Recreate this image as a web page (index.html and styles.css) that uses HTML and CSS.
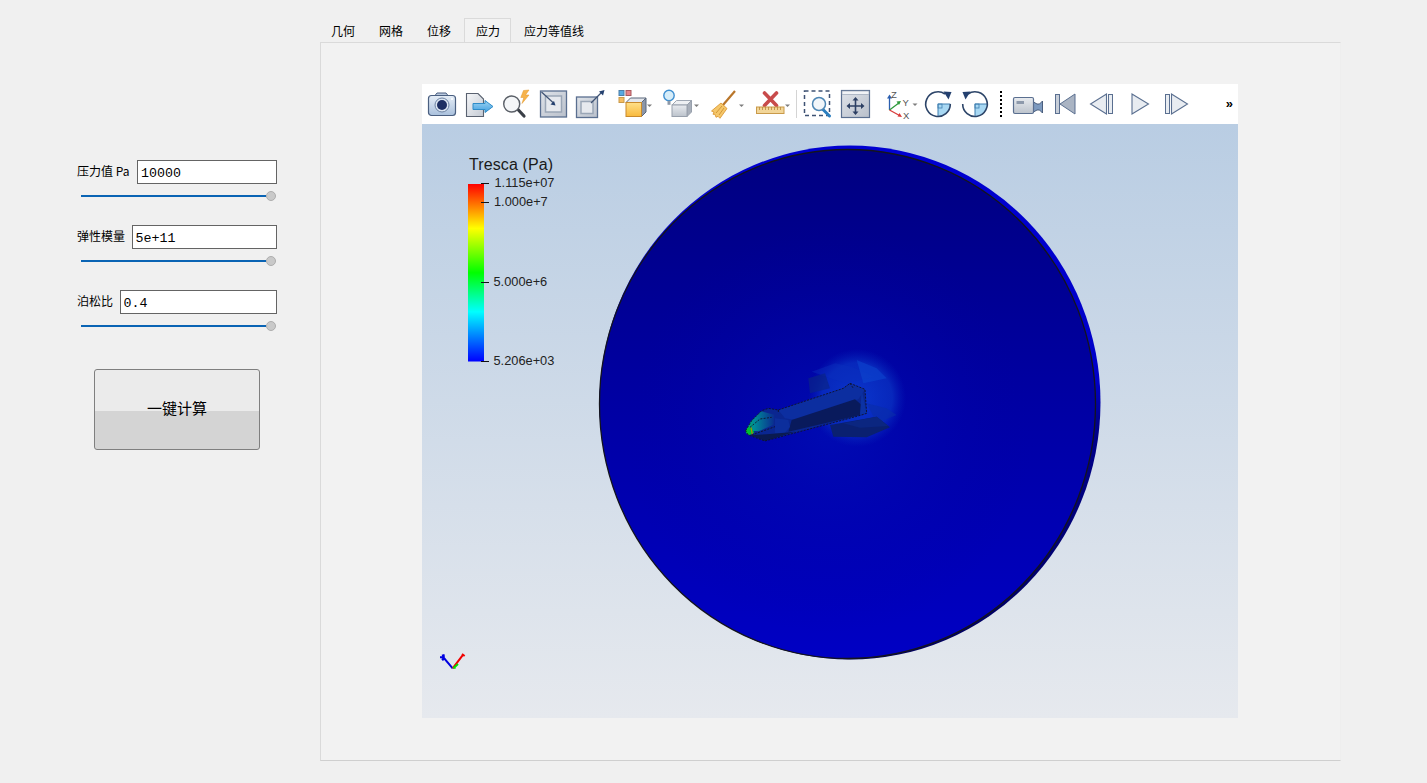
FILE: index.html
```html
<!DOCTYPE html>
<html lang="zh-CN">
<head>
<meta charset="utf-8">
<title>应力</title>
<link rel="stylesheet" href="styles.css">
</head>
<body>
<div class="app">
  <aside class="panel">
    <div class="field">
      <div class="field-row"><label class="field-label field-label-wide">压力值 Pa</label><input class="field-input" type="text" value="10000"></div>
      <div class="slider"><span class="slider-track"></span><span class="slider-knob"></span></div>
    </div>
    <div class="field">
      <div class="field-row"><label class="field-label">弹性模量</label><input class="field-input" type="text" value="5e+11"></div>
      <div class="slider"><span class="slider-track"></span><span class="slider-knob"></span></div>
    </div>
    <div class="field">
      <div class="field-row"><label class="field-label">泊松比</label><input class="field-input" type="text" value="0.4"></div>
      <div class="slider"><span class="slider-track"></span><span class="slider-knob"></span></div>
    </div>
    <button class="run-button" type="button">一键计算</button>
  </aside>

  <main class="workspace">
    <nav class="tabs">
      <span class="tab">几何</span>
      <span class="tab">网格</span>
      <span class="tab">位移</span>
      <span class="tab tab-active">应力</span>
      <span class="tab">应力等值线</span>
    </nav>
    <section class="pane">
      <div class="viewer">
        <div class="toolbar">
          <!-- camera -->
          <svg class="tool" viewBox="0 0 39 40">
            <defs>
              <linearGradient id="gBlue" x1="0" y1="0" x2="0" y2="1"><stop offset="0" stop-color="#e6eef7"/><stop offset="1" stop-color="#a9c0dc"/></linearGradient>
              <linearGradient id="gGray" x1="0" y1="0" x2="1" y2="1"><stop offset="0" stop-color="#f6f7f9"/><stop offset="1" stop-color="#c4cad3"/></linearGradient>
              <linearGradient id="gFrame" x1="0" y1="0" x2="1" y2="1"><stop offset="0" stop-color="#dfe3e9"/><stop offset="1" stop-color="#b9c0cb"/></linearGradient>
              <linearGradient id="gSky" x1="0" y1="0" x2="0" y2="1"><stop offset="0" stop-color="#9fd4f3"/><stop offset="1" stop-color="#3f9fe0"/></linearGradient>
              <linearGradient id="gGold" x1="0" y1="0" x2="0" y2="1"><stop offset="0" stop-color="#ffe08a"/><stop offset="1" stop-color="#f8b93c"/></linearGradient>
              <linearGradient id="gCube" x1="0" y1="0" x2="0" y2="1"><stop offset="0" stop-color="#e8ebef"/><stop offset="1" stop-color="#bcc3cc"/></linearGradient>
            </defs>
            <path d="M13 11.500l2-2.500h9l2 2.500z" fill="#b9c9de" stroke="#4a5f80"/>
            <rect x="6.500" y="11.500" width="27" height="20" rx="3" fill="url(#gBlue)" stroke="#4a5f80" stroke-width="1.200"/>
            <circle cx="20" cy="21" r="7" fill="#dce6f2" stroke="#6d83a3"/>
            <circle cx="20" cy="21" r="5" fill="#1d2f63"/>
            <circle cx="30" cy="15" r="1" fill="#fff"/>
          </svg>
          <!-- export -->
          <svg class="tool" viewBox="0 0 38 40">
            <path d="M5.500 9.500H17L22.500 15V32.500H5.500Z" fill="url(#gGray)" stroke="#5a6270" stroke-width="1.100"/>
            <path d="M12 19.500H24V16.500L32 22.500 24 28.500V25.500H12Z" fill="url(#gSky)" stroke="#2f8cc8"/>
          </svg>
          <!-- zoom to data -->
          <svg class="tool" viewBox="0 0 35 40">
            <path d="M18.500 25l6.500 7" stroke="#3a3f47" stroke-width="3.200" stroke-linecap="round"/>
            <circle cx="12.700" cy="20" r="8" fill="#f4f6f8" stroke="#5a5f67" stroke-width="1.400"/>
            <path d="M24.500 6.500l5.500-.5-3.500 5h3.500l-7 8.500 1.800-6h-3z" fill="#f7b34a" stroke="#e0962a" stroke-width=".5"/>
          </svg>
          <!-- reset -->
          <svg class="tool" viewBox="0 0 38 40">
            <rect x="6.500" y="7" width="26" height="26" fill="url(#gFrame)" stroke="#5a6f90" stroke-width="1.300"/>
            <rect x="11.500" y="12" width="16" height="16" fill="#e6e9ee" stroke="#9aa6b6" stroke-width="1.500"/>
            <path d="M7.500 8l12 11" stroke="#3e5273" stroke-width="1.200"/>
            <path d="M21.500 21.500l-5-1 3.500-3.500z" fill="#24406f"/>
          </svg>
          <!-- zoom out -->
          <svg class="tool" viewBox="0 0 37 40">
            <rect x="4.500" y="13" width="21" height="20.500" fill="url(#gFrame)" stroke="#5a6f90" stroke-width="1.300"/>
            <rect x="9" y="17.500" width="12" height="12" fill="#e6e9ee" stroke="#9aa6b6" stroke-width="1.500"/>
            <path d="M19 19l11-11" stroke="#3e5273" stroke-width="1.300"/>
            <path d="M32.500 6l-1.500 5.500-4-4z" fill="#24406f"/>
          </svg>
          <!-- color by -->
          <svg class="tool" viewBox="0 0 48 40">
            <rect x="10" y="6.500" width="5" height="5" fill="#58a9e2" stroke="#4c7fa8"/>
            <rect x="17" y="6.500" width="5" height="5" fill="#e6858a" stroke="#a8595e"/>
            <rect x="10" y="13.500" width="5" height="5" fill="#f5bd62" stroke="#c99a4a"/>
            <path d="M17 18.500l4.500-4.500h15.500l-4.500 4.500z" fill="#e4e7ec" stroke="#59667b"/>
            <path d="M32.500 18.500l4.500-4.500v14l-4.500 4.500z" fill="#8b96a8" stroke="#59667b"/>
            <rect x="17" y="18.500" width="15.500" height="14" fill="url(#gGold)" stroke="#c98a2c"/>
            <path d="M38 20.500h5l-2.500 2.500z" fill="#7d7d7d"/>
          </svg>
          <!-- lighting -->
          <svg class="tool" viewBox="0 0 50 40">
            <path d="M15 21l4.500-4.500h15l-4.500 4.500z" fill="#eef0f3" stroke="#a0a8b4"/>
            <path d="M30 21l4.500-4.500v11.500l-4.500 4.500z" fill="#a8afba" stroke="#98a0ac"/>
            <rect x="15" y="21" width="15" height="11.500" fill="url(#gCube)" stroke="#98a0ac"/>
            <circle cx="12" cy="11.500" r="5.200" fill="#d6edf9" stroke="#3f8fd0" stroke-width="1.400"/>
            <rect x="10.500" y="16.800" width="3" height="4" fill="#8e99a8"/>
            <path d="M37 20.500h5l-2.500 2.500z" fill="#7d7d7d"/>
          </svg>
          <!-- broom -->
          <svg class="tool" viewBox="0 0 45 40">
            <path d="M16 21L28 7" stroke="#b9762a" stroke-width="2.200"/>
            <path d="M14 19l6 5.500-7 9.800-2-2-2 1-1-3-2 0 1-2.300-2.500-1z" fill="#f5c76a" stroke="#d89128" stroke-width=".8"/>
            <path d="M15 22l-6 7M17 24l-5 7" stroke="#c98a2c" stroke-width=".8"/>
            <path d="M32 20.500h5L34.500 23z" fill="#7d7d7d"/>
          </svg>
          <!-- delete ruler -->
          <svg class="tool" viewBox="0 0 43 40">
            <path d="M12.500 9l12 12.500M24.500 9l-12 12.500" stroke="#c84b4b" stroke-width="3.600" stroke-linecap="round"/>
            <rect x="4.500" y="23" width="27.500" height="6.500" fill="#f2d699" stroke="#c99a4a"/>
            <path d="M7.500 23v3M10.500 23v3M13.500 23v3M16.500 23v3M19.500 23v3M22.500 23v3M25.500 23v3M28.500 23v3" stroke="#b98a3a" stroke-width=".8"/>
            <path d="M33 20.500h5L35.500 23z" fill="#7d7d7d"/>
          </svg>
          <span class="tool-sep"></span>
          <!-- zoom box -->
          <svg class="tool" viewBox="0 0 38 40">
            <rect x="6.500" y="7" width="25" height="24.500" fill="none" stroke="#3e5273" stroke-width="1.500" stroke-dasharray="4 3"/>
            <path d="M25 25.500l6.500 6.500" stroke="#2a7fc0" stroke-width="3" stroke-linecap="round"/>
            <circle cx="21" cy="20" r="6.500" fill="#f1f6fa" stroke="#4d86b4" stroke-width="1.500"/>
          </svg>
          <!-- interactive move -->
          <svg class="tool" viewBox="0 0 36 40">
            <rect x="5.500" y="6.500" width="28" height="27" fill="url(#gFrame)" stroke="#5a6f90" stroke-width="1.200"/>
            <rect x="6" y="7" width="27" height="3.500" fill="#f1f3f6" stroke="#8c99ad" stroke-width=".6"/>
            <path d="M19.500 15v14M12.500 22h14" stroke="#2c3f63" stroke-width="1.600"/>
            <path d="M19.500 13l-3 3.500h6zM19.500 31l-3-3.500h6zM10.500 22l3.500-3v6zM28.500 22l-3.500-3v6z" fill="#2c3f63"/>
          </svg>
          <!-- axes -->
          <svg class="tool" viewBox="0 0 50 40">
            <path d="M17.500 26V13" stroke="#2b5fb0" stroke-width="1.300"/>
            <path d="M17.500 10.500l-2.500 4h5z" fill="#2b5fb0"/>
            <path d="M17.500 26l10-7.500" stroke="#2f9a3c" stroke-width="1.300"/>
            <path d="M29 17l-4.500.5 2.500 3.500z" fill="#2f9a3c"/>
            <path d="M17.500 26l10 5.500" stroke="#d93a3a" stroke-width="1.300"/>
            <path d="M30 33l-4.500-.5 2-3.500z" fill="#d93a3a"/>
            <text class="axis-letter" x="19" y="13.500">Z</text>
            <text class="axis-letter" x="30.500" y="21.500">Y</text>
            <text class="axis-letter" x="31" y="34.500">X</text>
            <path d="M40.500 19.500h5L43 22z" fill="#7d7d7d"/>
          </svg>
          <!-- rotate cw -->
          <svg class="tool" viewBox="0 0 35 40">
            <path d="M16 20h12.300A12.300 12.300 0 0 1 16 32.300z" fill="#a8d8f3"/>
            <rect x="16" y="20" width="4" height="4" fill="none" stroke="#3f7fb0" stroke-width=".8"/>
            <path d="M16 20h12.300M16 20v12.300" stroke="#3f7fb0" stroke-width="1"/>
            <path d="M23 10A12.300 12.300 0 1 0 28.300 20" fill="none" stroke="#2c4468" stroke-width="1.600"/>
            <path d="M21.500 7.500l8 .5-3 7.500z" fill="#24406f"/>
          </svg>
          <!-- rotate ccw -->
          <svg class="tool" viewBox="0 0 36 40">
            <path d="M18 20h12.300A12.300 12.300 0 0 1 18 32.300z" fill="#a8d8f3"/>
            <rect x="18" y="20" width="4" height="4" fill="none" stroke="#3f7fb0" stroke-width=".8"/>
            <path d="M18 20h12.300M18 20v12.300" stroke="#3f7fb0" stroke-width="1"/>
            <path d="M11 10A12.300 12.300 0 1 1 5.700 20" fill="none" stroke="#2c4468" stroke-width="1.600"/>
            <path d="M13.500 7.500l-8 .5 3 7.500z" fill="#24406f"/>
          </svg>
          <span class="tool-dots"></span>
          <!-- video camera -->
          <svg class="tool" viewBox="0 0 38 40">
            <path d="M24.500 18l3.500 2h2.500l3-3v12l-3-3h-2.500l-3.500 2z" fill="#7d9abf" stroke="#3e5273" stroke-width=".9"/>
            <rect x="4.500" y="13.500" width="20" height="16" rx="1.500" fill="url(#gCube)" stroke="#5a6f90" stroke-width="1.200"/>
            <rect x="7.500" y="17" width="7.500" height="3" fill="#8d99ab"/>
          </svg>
          <!-- first -->
          <svg class="tool" viewBox="0 0 37 40">
            <rect x="8.500" y="10.500" width="4" height="19" fill="#c7ced8" stroke="#5a6f90"/>
            <path d="M28 10v20L13 20z" fill="#aab4c3" stroke="#5a6f90"/>
          </svg>
          <!-- previous -->
          <svg class="tool" viewBox="0 0 37 40">
            <path d="M22.500 10v20L6.500 20z" fill="#e8ecf1" stroke="#5a6f90" stroke-width="1.100"/>
            <rect x="24.500" y="10.500" width="4" height="19" fill="#e8ecf1" stroke="#5a6f90"/>
          </svg>
          <!-- next -->
          <svg class="tool" viewBox="0 0 37 40">
            <path d="M11 10v20l16.500-10z" fill="#e8ecf1" stroke="#5a6f90" stroke-width="1.100"/>
          </svg>
          <!-- last -->
          <svg class="tool" viewBox="0 0 37 40">
            <rect x="7.500" y="10.500" width="4" height="19" fill="#e8ecf1" stroke="#5a6f90"/>
            <path d="M13.500 10v20L29.500 20z" fill="#e8ecf1" stroke="#5a6f90" stroke-width="1.100"/>
          </svg>
          <span class="tool-fill"></span>
          <span class="tool-more">»</span>
        </div>
        <svg class="scene" viewBox="422 124 816 594">
          <defs>
            <linearGradient id="bar" x1="0" y1="0" x2="0" y2="1">
              <stop offset="0" stop-color="#ff0000"/>
              <stop offset=".25" stop-color="#ffff00"/>
              <stop offset=".5" stop-color="#00ff00"/>
              <stop offset=".72" stop-color="#00ffff"/>
              <stop offset="1" stop-color="#0000ff"/>
            </linearGradient>
            <linearGradient id="shell" x1="0" y1="0" x2="0" y2="1">
              <stop offset="0" stop-color="#0000d0"/>
              <stop offset=".46" stop-color="#0000c8"/>
              <stop offset=".54" stop-color="#00008c"/>
              <stop offset="1" stop-color="#00005c"/>
            </linearGradient>
            <linearGradient id="disc" x1="0" y1="0" x2="0" y2="1">
              <stop offset="0" stop-color="#000080"/>
              <stop offset=".45" stop-color="#0000a0"/>
              <stop offset="1" stop-color="#0000c4"/>
            </linearGradient>
            <radialGradient id="halo" cx=".5" cy=".5" r=".5">
              <stop offset="0" stop-color="#0018c0" stop-opacity=".45"/>
              <stop offset=".6" stop-color="#0008b0" stop-opacity=".2"/>
              <stop offset="1" stop-color="#0000a0" stop-opacity="0"/>
            </radialGradient>
            <radialGradient id="glow" cx=".5" cy=".5" r=".5">
              <stop offset="0" stop-color="#0c3ed2" stop-opacity=".85"/>
              <stop offset=".72" stop-color="#0a36c4" stop-opacity=".7"/>
              <stop offset="1" stop-color="#0424b8" stop-opacity="0"/>
            </radialGradient>
            <linearGradient id="nose" x1="0" y1="0" x2="1" y2="0">
              <stop offset="0" stop-color="#00b060"/>
              <stop offset=".3" stop-color="#008c98"/>
              <stop offset="1" stop-color="#0a2c90"/>
            </linearGradient>
          </defs>

          <!-- shell -->
          <ellipse cx="850" cy="402.500" rx="250.500" ry="257" fill="url(#shell)"/>
          <ellipse cx="847.500" cy="404" rx="248" ry="254.500" fill="url(#disc)" stroke="#14141e" stroke-width="1.300"/>
          <circle cx="830" cy="428" r="205" fill="url(#halo)"/>
          <circle cx="857" cy="398" r="49" fill="url(#glow)"/>

          <!-- rocket, in 3x coordinates -->
          <g transform="translate(730 340) scale(.33333)">
            <path d="M245 95l70-25 50 10 70 30-90 20z" fill="#0a2fbc" opacity=".45"/>
            <path d="M380 60l60 25 30 30-70 15z" fill="#0e52d8" opacity=".4"/>
            <path d="M410 190l60 15 30 20-60 25z" fill="#0a2da8" opacity=".6"/>
            <path d="M300 255l140-25 40 32-70 30-100-2z" fill="#0a2070"/>
            <path d="M340 250l100-20 35 28-85 5z" fill="#0b2680"/>
            <path d="M235 115l50-15 15 45-60 15z" fill="#0a2488" opacity=".7"/>
            <path d="M47 272l18-30 30-30 20-7 30 5 195-65 20-15 45 18 5 72-15 5-205 55-85 23-50-18z" fill="#0a2690"/>
            <path d="M145 210l195-65 20-15 45 18-20 30-190 62-30-5z" fill="#0c2ea0"/>
            <path d="M185 240l190-62 20 17-5 30-215 50z" fill="#091a5c"/>
            <path d="M135 235l40 5 5 20-15 18-30 2z" fill="#0c2e9c"/>
            <path d="M395 150l15 70-20 5z" fill="#0b32a4"/>
            <path d="M110 283l55-5 30-3-90 28-45-18z" fill="#0a1a50"/>
            <path d="M47 272l16-28 30-30 40 10-2 30-45 20z" fill="url(#nose)"/>
            <path d="M47 272l8-10 10 2 8 14-16 8-8-6z" fill="#00c030"/>
            <path d="M63 262l4 22" stroke="#c87810" stroke-width="3"/>
            <g class="edge">
              <path d="M47 272l18-30 30-30 20-7 30 5 195-65 20-15 45 18 5 72-15 5-205 55-85 23-50-18z"/>
              <path d="M60 262l30-25 35-5M65 285l70-25M145 210v6M360 130l10 15"/>
            </g>
          </g>

          <!-- legend -->
          <text class="legend-title" x="469" y="170">Tresca (Pa)</text>
          <rect x="468" y="184" width="16" height="177.500" fill="url(#bar)"/>
          <path class="legend-tick" d="M481 183.500h8M481 202.500h8M481 282.500h8M481 361.500h8"/>
          <text class="legend-label" x="494.500" y="187">1.115e+07</text>
          <text class="legend-label" x="494" y="206">1.000e+7</text>
          <text class="legend-label" x="493.500" y="286">5.000e+6</text>
          <text class="legend-label" x="493.500" y="365">5.206e+03</text>

          <!-- orientation axes, in 3x coordinates -->
          <g transform="translate(430 640) scale(.33333)" fill="none" stroke-width="6">
            <path d="M30 52h10l28 33" stroke="#0000e0"/>
            <path d="M36 48l8-2M36 60l8-6" stroke="#0000e0" stroke-width="8"/>
            <path d="M68 85l32-42M96 42l8 6" stroke="#f00000"/>
            <path d="M70 85l14-13M74 80v6" stroke="#00e000"/>
          </g>
        </svg>
      </div>
    </section>
  </main>
</div>
</body>
</html>
```

FILE: styles.css
```css
* {
  box-sizing: border-box;
}

html,
body {
  margin: 0;
  height: 100%;
  overflow: hidden;
  background: #f0f0f0;
}

body {
  font-family: "Noto Sans CJK SC", "Liberation Sans", sans-serif;
  font-size: 12px;
  color: #000;
}

.app {
  display: flex;
  height: 783px;
}

/* left form */
.panel {
  width: 319px;
  flex: none;
  padding: 160px 0 0 77px;
}

.field {
  width: 200px;
  margin-bottom: 24px;
}

.field-row {
  display: flex;
  align-items: center;
  gap: 7px;
  height: 24px;
}

.field-label {
  flex: none;
  font-size: 12px;
  line-height: 20px;
  margin-top: -2px;
}

.field-label-wide {
  padding-right: 1px;
}

.field-input {
  flex: 1;
  min-width: 0;
  height: 24px;
  padding: 2px 3px 0 2.500px;
  border: 1px solid #646464;
  border-radius: 0;
  background: #fff;
  font-family: "Liberation Mono", "Noto Sans CJK SC", monospace;
  font-size: 13.300px;
  color: #000;
  outline: none;
}

.slider {
  display: flex;
  align-items: center;
  height: 10px;
  margin: 7px 0 0 4px;
  width: 195px;
}

.slider-track {
  flex: 1;
  height: 2px;
  background: #0a64b4;
}

.slider-knob {
  flex: none;
  width: 10.500px;
  height: 10.500px;
  border: 1px solid #aeaeae;
  border-radius: 50%;
  background: #c9c9c9;
}

.run-button {
  display: block;
  width: 166px;
  height: 81px;
  margin: 38px 0 0 17px;
  padding: 0 0 4px;
  border: 1px solid #7f7f7f;
  border-radius: 3px;
  background: linear-gradient(#ebebeb 52%, #d4d4d4 52%);
  font-family: "Noto Sans CJK SC", sans-serif;
  font-size: 15px;
  color: #000;
}

/* tabs and pane */
.workspace {
  flex: none;
  width: 1022px;
  padding-top: 18px;
}

.tabs {
  display: flex;
  height: 24px;
}

.tab {
  padding: 2px 12px 0;
  line-height: 21px;
  font-size: 12px;
}

.tab-active {
  margin: 0 1px;
  padding: 2px 10px 0 11px;
  background: #f2f2f2;
  border: 1px solid #dadada;
  border-bottom: 0;
  line-height: 20px;
}

.pane {
  height: 719px;
  margin-left: 1px;
  padding: 41px 0 0 101px;
  background: #f2f2f2;
  border: 1px solid #dadada;
  border-right-color: #eeeeee;
  border-bottom-color: #cfcfcf;
}

.viewer {
  width: 816px;
}

/* paraview toolbar */
.toolbar {
  display: grid;
  grid-template-columns: 39px 38px 35px 38px 37px 48px 50px 45px 43px 3px 38px 36px 50px 35px 36px 16px 38px 37px 37px 37px 37px 1fr 43px;
  height: 40px;
  background: #fff;
}

.tool {
  display: block;
  width: 100%;
  height: 40px;
}

.tool-sep {
  width: 1px;
  height: 28px;
  margin: 6px 0 0 1px;
  background: #d4d4d4;
}

.tool-dots {
  width: 2px;
  height: 26px;
  margin: 7px 0 0 7px;
  background: repeating-linear-gradient(#000 0 2px, transparent 2px 4px);
}

.tool-more {
  font-family: "Liberation Sans", sans-serif;
  font-size: 13px;
  font-weight: 700;
  line-height: 39px;
  text-align: right;
  padding-right: 5px;
}

.axis-letter {
  font-family: "Liberation Sans", sans-serif;
  font-size: 9.500px;
  fill: #555;
}

/* vtk render view */
.scene {
  display: block;
  width: 816px;
  height: 594px;
  background: linear-gradient(#b9cde3, #e6e9ee);
}

.edge {
  fill: none;
  stroke: #101020;
  stroke-width: 2.500;
  stroke-dasharray: 6 4;
}

.legend-title {
  font-family: "Liberation Sans", sans-serif;
  font-size: 16px;
  letter-spacing: .1px;
  fill: #1a1a1a;
}

.legend-label {
  font-family: "Liberation Sans", sans-serif;
  font-size: 12.800px;
  fill: #222;
}

.legend-tick {
  stroke: #111;
  stroke-width: 1;
  fill: none;
}
```
